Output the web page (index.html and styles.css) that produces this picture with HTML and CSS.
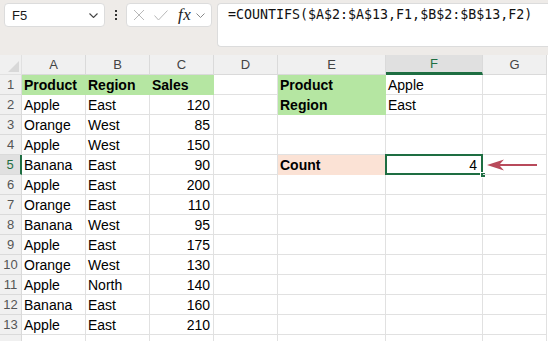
FILE: index.html
```html
<!DOCTYPE html>
<html>
<head>
<meta charset="utf-8">
<link rel="stylesheet" href="styles.css">
</head>
<body>
<div class="toolbar">
  <div class="namebox">
    <span class="ref">F5</span>
    <svg class="chev" width="9" height="5" viewBox="0 0 9 5"><path d="M0.5 0.5 L4.5 4.5 L8.5 0.5" fill="none" stroke="#444" stroke-width="1.1"/></svg>
  </div>
  <div class="dots"><span></span><span></span><span></span></div>
  <div class="fxbox">
    <svg width="12" height="12" viewBox="0 0 12 12"><path d="M1 1 L11 11 M11 1 L1 11" stroke="#b8b8b8" stroke-width="1"/></svg>
    <svg width="14" height="11" viewBox="0 0 14 11"><path d="M0.5 5.5 L4.5 10 L13.5 0.5" fill="none" stroke="#b8b8b8" stroke-width="1"/></svg>
    <span class="fx">fx</span>
    <svg class="chev2" width="9" height="5" viewBox="0 0 9 5"><path d="M0.5 0.5 L4.5 4.5 L8.5 0.5" fill="none" stroke="#888" stroke-width="1"/></svg>
  </div>
  <div class="formula">=COUNTIFS($A$2:$A$13,F1,$B$2:$B$13,F2)</div>
</div>

<div class="sheet">
  <div class="corner"></div>
  <div class="ch">A</div><div class="ch">B</div><div class="ch">C</div><div class="ch">D</div><div class="ch">E</div><div class="ch sel">F</div><div class="ch">G</div>

  <div class="rh">1</div><div class="c b green">Product</div><div class="c b green">Region</div><div class="c b green">Sales</div><div class="c"></div><div class="c b green">Product</div><div class="c">Apple</div><div class="c"></div>
  <div class="rh">2</div><div class="c">Apple</div><div class="c">East</div><div class="c n">120</div><div class="c"></div><div class="c b green">Region</div><div class="c">East</div><div class="c"></div>
  <div class="rh">3</div><div class="c">Orange</div><div class="c">West</div><div class="c n">85</div><div class="c"></div><div class="c"></div><div class="c"></div><div class="c"></div>
  <div class="rh">4</div><div class="c">Apple</div><div class="c">West</div><div class="c n">150</div><div class="c"></div><div class="c"></div><div class="c"></div><div class="c"></div>
  <div class="rh sel">5</div><div class="c">Banana</div><div class="c">East</div><div class="c n">90</div><div class="c"></div><div class="c b peach">Count</div><div class="c n active">4</div><div class="c arrowcell"><svg class="arrow" width="52" height="12" viewBox="0 0 52 12"><path d="M0 6 L17 0.5 L13 5 L50 5 L50 7 L13 7 L17 11.5 Z" fill="#b84a5b"/></svg></div>
  <div class="rh">6</div><div class="c">Apple</div><div class="c">East</div><div class="c n">200</div><div class="c"></div><div class="c"></div><div class="c"></div><div class="c"></div>
  <div class="rh">7</div><div class="c">Orange</div><div class="c">East</div><div class="c n">110</div><div class="c"></div><div class="c"></div><div class="c"></div><div class="c"></div>
  <div class="rh">8</div><div class="c">Banana</div><div class="c">West</div><div class="c n">95</div><div class="c"></div><div class="c"></div><div class="c"></div><div class="c"></div>
  <div class="rh">9</div><div class="c">Apple</div><div class="c">East</div><div class="c n">175</div><div class="c"></div><div class="c"></div><div class="c"></div><div class="c"></div>
  <div class="rh">10</div><div class="c">Orange</div><div class="c">West</div><div class="c n">130</div><div class="c"></div><div class="c"></div><div class="c"></div><div class="c"></div>
  <div class="rh">11</div><div class="c">Apple</div><div class="c">North</div><div class="c n">140</div><div class="c"></div><div class="c"></div><div class="c"></div><div class="c"></div>
  <div class="rh">12</div><div class="c">Banana</div><div class="c">East</div><div class="c n">160</div><div class="c"></div><div class="c"></div><div class="c"></div><div class="c"></div>
  <div class="rh">13</div><div class="c">Apple</div><div class="c">East</div><div class="c n">210</div><div class="c"></div><div class="c"></div><div class="c"></div><div class="c"></div>
  <div class="rh"></div><div class="c"></div><div class="c"></div><div class="c"></div><div class="c"></div><div class="c"></div><div class="c"></div><div class="c"></div>
</div>
</body>
</html>
```

FILE: styles.css
```css
html, body {
  margin: 0;
  padding: 0;
  background: #ffffff;
  overflow: hidden;
}
body {
  width: 548px;
  height: 341px;
  font-family: "Liberation Sans", Arial, sans-serif;
}
.toolbar {
  background: #eeebe8;
  height: 55px;
  display: flex;
  align-items: flex-start;
  padding: 3px 0 0 4px;
  box-sizing: border-box;
}
.namebox {
  width: 101px;
  height: 24px;
  box-sizing: border-box;
  background: #fff;
  border: 1px solid #dcdcdc;
  border-radius: 4px;
  display: flex;
  align-items: center;
  justify-content: space-between;
  padding: 0 6px 0 7px;
}
.ref {
  font-size: 13px;
  color: #1a1a1a;
}
.chev { margin-top: 1px; }
.dots {
  width: 21px;
  height: 24px;
  display: flex;
  flex-direction: column;
  align-items: center;
  justify-content: center;
  gap: 2px;
}
.dots span {
  width: 2px;
  height: 2px;
  background: #333;
  display: block;
}
.fxbox {
  width: 86px;
  height: 24px;
  box-sizing: border-box;
  background: #fff;
  border: 1px solid #dcdcdc;
  border-radius: 4px;
  display: flex;
  align-items: center;
  padding: 0 0 0 6px;
  gap: 9px;
}
.fx {
  font-family: "Liberation Serif", "Times New Roman", serif;
  font-style: italic;
  font-size: 17px;
  color: #222;
  letter-spacing: 0.5px;
  margin-left: 1px;
}
.chev2 { margin-left: -4px; }
.formula {
  margin-left: 5px;
  flex: 1;
  height: 44px;
  box-sizing: border-box;
  background: #fff;
  border: 1px solid #dcdcdc;
  border-right: none;
  border-radius: 4px 0 0 4px;
  font-family: "DejaVu Sans Mono", "Liberation Mono", monospace;
  font-size: 13.3px;
  color: #111;
  padding: 3px 0 0 10px;
  white-space: nowrap;
}
.sheet {
  display: grid;
  grid-template-columns: 22px 64px 64px 64px 64px 108px 97px 64px;
  grid-template-rows: 20px repeat(14, 20px);
  background: #fff;
}
.sheet > div {
  box-sizing: border-box;
  border-right: 1px solid #e1e1e1;
  border-bottom: 1px solid #e1e1e1;
}
.corner {
  background: #f0f0f0;
  position: relative;
}
.corner::after {
  content: "";
  position: absolute;
  right: 2px;
  bottom: 2px;
  width: 0;
  height: 0;
  border-left: 11px solid transparent;
  border-bottom: 11px solid #d8d8d8;
}
.ch {
  background: #f0f0f0;
  color: #444;
  font-size: 13px;
  text-align: center;
  line-height: 19px;
  border-right-color: #dadada !important;
  border-bottom-color: #dadada !important;
}
.ch.sel {
  background: #e0e0e0;
  color: #1e6e42;
  border-bottom: 3px solid #1e6e42 !important;
  line-height: 18px;
}
.rh {
  background: #f0f0f0;
  color: #555;
  font-size: 13px;
  text-align: center;
  line-height: 19px;
  border-right-color: #dadada !important;
  border-bottom-color: #dadada !important;
}
.rh.sel {
  background: #e0e0e0;
  color: #1e6e42;
  border-right: 2px solid #1e6e42 !important;
}
.c {
  font-size: 14px;
  color: #000;
  line-height: 20px;
  padding: 0 3px 0 2px;
  white-space: nowrap;
}
.b { font-weight: bold; }
.n { text-align: right; }
.green {
  background: #b5e6a2;
  border-color: #b5e6a2 !important;
}
.peach {
  background: #fbe2d5;
  border-color: #fbe2d5 !important;
}
.active {
  position: relative;
  padding-right: 5px;
}
.active::before {
  content: "";
  position: absolute;
  left: -1px;
  top: -1px;
  right: -1px;
  bottom: -1px;
  border: 2px solid #1e6e42;
}
.active::after {
  content: "";
  position: absolute;
  right: -4px;
  bottom: -4px;
  width: 6px;
  height: 6px;
  background: #1e6e42;
  border: 1px solid #fff;
  box-sizing: border-box;
}
.arrowcell { position: relative; }
.arrow {
  position: absolute;
  left: 4px;
  top: 4px;
}
```
